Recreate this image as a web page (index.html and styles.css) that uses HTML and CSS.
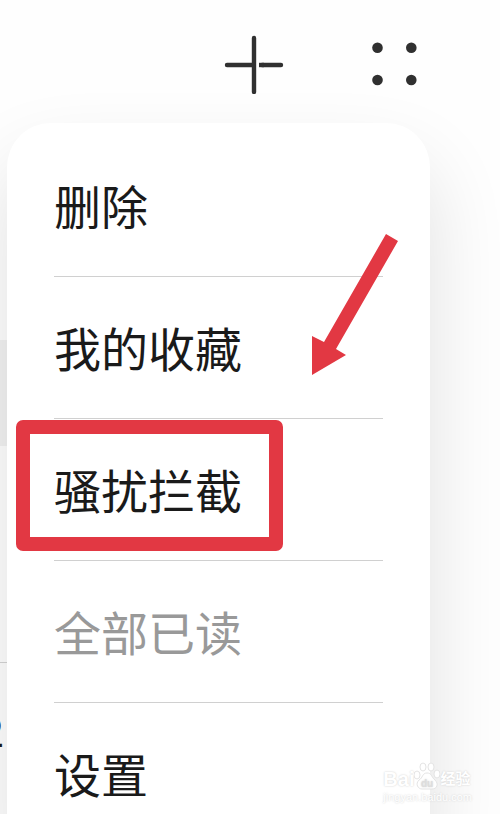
FILE: index.html
```html
<!DOCTYPE html>
<html lang="zh-CN">
  <head>
    <meta charset="UTF-8" />
    <meta name="viewport" content="width=device-width, initial-scale=1" />
    <title>信息</title>
    <link rel="stylesheet" href="styles.css">
  </head>
  <body>
    <div class="screen">
      <!-- Top bar with the new message and more buttons -->
      <header class="toolbar">
        <button type="button" class="icon-button" aria-label="新建">
          <svg width="60" height="60" viewBox="0 0 60 60">
            <path d="M30 4V58M3 31H28" />
            <path class="flat" d="M35 31H40" />
            <path d="M38 31H57" />
          </svg>
        </button>
        <button type="button" class="icon-button" aria-label="更多">
          <svg width="60" height="60" viewBox="0 0 60 60">
            <circle cx="13.5" cy="13.7" r="5.3" />
            <circle cx="47.3" cy="13.7" r="5.3" />
            <circle cx="13.5" cy="46" r="5.3" />
            <circle cx="47.3" cy="46" r="5.3" />
          </svg>
        </button>
      </header>

      <!-- Message list, mostly hidden behind the menu -->
      <main class="messages">
        <div class="search-bar"></div>
        <div class="message"></div>
        <div class="message"><span class="time">2</span></div>
      </main>

      <nav class="menu">
        <ul>
          <li><button type="button">删除</button></li>
          <li><button type="button">我的收藏</button></li>
          <li class="marked"><button type="button">骚扰拦截</button></li>
          <li><button type="button" disabled>全部已读</button></li>
          <li><button type="button">设置</button></li>
        </ul>
        <svg class="arrow" width="90" height="144" viewBox="0 0 90 144">
          <path d="M75 1L87 8L25 116L35 122L1 142V103L13 109Z" />
        </svg>
      </nav>

      <div class="watermark">
        <div class="brand">
          <span>Bai</span>
          <svg width="26" height="28" viewBox="0 0 26 28">
            <ellipse cx="3" cy="13" rx="3" ry="4" />
            <ellipse cx="9" cy="5" rx="3" ry="4" />
            <ellipse cx="17" cy="5" rx="3" ry="4" />
            <ellipse cx="23" cy="12" rx="3" ry="4" />
            <path d="M13 11C8 11 9 16 5 18C1 22 4 27 8 27H18C23 27 25 22 21 18C17 15 18 11 13 11Z" />
            <text x="7" y="25">du</text>
          </svg>
          <span class="brand-cn">经验</span>
        </div>
        <div class="site">jingyan.baidu.com</div>
      </div>
    </div>
  </body>
</html>
```

FILE: styles.css
```css
* {
  margin: 0;
  padding: 0;
  box-sizing: border-box;
}

body {
  font-family: "Noto Sans CJK SC", sans-serif;
  background: #fefefe;
  color: #1a1a1a;
}

.screen {
  position: relative;
  height: 100vh;
  overflow: hidden;
}

/* Top bar */
.toolbar {
  display: flex;
  justify-content: flex-end;
  gap: 80px;
  padding: 34px 76px 0 0;
}

.icon-button {
  width: 60px;
  height: 60px;
  border: none;
  background: none;
  cursor: pointer;
}

.icon-button svg {
  display: block;
  fill: #303030;
}

.icon-button path {
  fill: none;
  stroke: #303030;
  stroke-width: 4.4;
  stroke-linecap: round;
}

.icon-button .flat {
  stroke-linecap: butt;
}

/* Message list */
.messages {
  width: 50%;
  padding-top: 246px;
}

.search-bar {
  height: 106px;
  background: #f2f2f2;
}

.message {
  height: 217px;
  border-bottom: 1px solid #d4d4d4;
}

.time {
  display: flex;
  justify-content: flex-end;
  width: 4px;
  padding-top: 38px;
  font-size: 40px;
}

/* Drop-down menu */
.menu {
  position: absolute;
  top: 123px;
  left: 7px;
  right: 70px;
  padding: 12px 47px;
  background: #fff;
  border-radius: 44px;
  box-shadow: 0 40px 80px rgba(0, 0, 0, 0.12);
}

.menu ul {
  list-style: none;
}

.menu li {
  position: relative;
  border-bottom: 1px solid #d0d0d0;
}

.menu li:last-child {
  border-bottom: none;
}

.menu button {
  display: block;
  width: 100%;
  height: 141px;
  padding-bottom: 2px;
  border: none;
  background: none;
  color: #1a1a1a;
  font-family: inherit;
  font-size: 47px;
  text-align: left;
  cursor: pointer;
}

.menu button:disabled {
  color: #999;
  cursor: default;
}

/* Red frame around the highlighted item */
.marked::after {
  content: "";
  position: absolute;
  box-sizing: border-box;
  top: 1px;
  left: -38px;
  width: 267px;
  height: 131px;
  border: 14px solid #e23843;
  border-radius: 7px;
}

.arrow {
  position: absolute;
  top: 110px;
  right: 29px;
  fill: #e23843;
}

/* Watermark */
.watermark {
  position: absolute;
  right: 28px;
  bottom: 10px;
  color: #fff;
  text-shadow: 0 0 2px #ccc;
}

.brand {
  display: flex;
  align-items: flex-end;
  font: bold 20px/22px "Liberation Sans", "Noto Sans CJK SC", sans-serif;
}

.brand svg {
  fill: #fff;
  stroke: #e4e4e4;
}

.brand text {
  fill: #ddd;
  stroke: none;
  font-size: 10px;
}

.brand-cn {
  font-size: 15px;
}

.site {
  font: 11px/14px "Liberation Sans", sans-serif;
}
```
